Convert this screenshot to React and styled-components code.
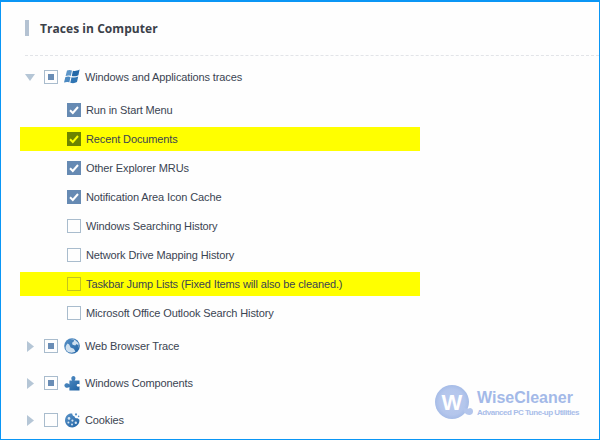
import React from "react";
import styled, { createGlobalStyle } from "styled-components";

const Global = createGlobalStyle`
  html, body { margin: 0; padding: 0; background: #fff; }
  body { font-family: "Liberation Sans", sans-serif; }
`;

const Frame = styled.div`
  position: relative;
  box-sizing: border-box;
  width: 600px;
  height: 440px;
  overflow: hidden;
  border: 1px solid #0a96f5;
  border-top-width: 2px;
  background: #fefefe;
  color: #3a4452;
  font-family: "Liberation Sans", sans-serif;
  font-size: 11px;
  letter-spacing: -0.12px;
`;

const Header = styled.header`
  display: flex;
  align-items: center;
  gap: 11px;
  height: 16px;
  margin: 18px 0 0 24px;
`;

const HeaderBar = styled.span`
  width: 4px;
  height: 16px;
  background: #b4c2d2;
`;

const Title = styled.h1`
  margin: 0;
  font-family: "Open Sans", sans-serif;
  font-size: 12px;
  font-weight: 700;
  letter-spacing: 0.05px;
  color: #3b4149;
`;

const Divider = styled.hr`
  height: 0;
  margin: 19px 0 0 24px;
  border: 0;
  border-top: 1px dashed #e2e4e8;
`;

const Tree = styled.div`
  display: flex;
  flex-direction: column;
  padding: 9px 0 0 19px;
`;

const Group = styled.div`
  display: flex;
  align-items: center;
  height: 24px;
  margin-top: ${(p) => p.$gap || 0}px;
  padding-left: 5px;
`;

const Caret = styled.span`
  display: flex;
  justify-content: center;
  width: 10px;
  margin-right: 9px;
`;

const Box = styled.span`
  box-sizing: border-box;
  display: flex;
  align-items: center;
  justify-content: center;
  flex: none;
  width: 14px;
  height: 14px;
  border: 1px solid ${(p) => (p.$hl ? "#c3c31e" : "#a9bccd")};
  background: ${(p) => (p.$checked ? (p.$hl ? "#6d8400" : "#668ab3") : "transparent")};
  ${(p) => p.$checked && `border-color: ${p.$hl ? "#6d8400" : "#668ab3"};`}
`;

const Dot = styled.span`
  width: 6px;
  height: 6px;
  background: #6a8db5;
`;

const GroupIcon = styled.span`
  display: flex;
  width: 16px;
  height: 16px;
  margin: 0 5px 0 6px;
`;

const Children = styled.div`
  display: flex;
  flex-direction: column;
  gap: 5px;
  margin-top: 9px;
`;

const Item = styled.div`
  display: flex;
  align-items: center;
  gap: 5px;
  width: 353px;
  height: 24px;
  padding-left: 47px;
  background: ${(p) => (p.$hl ? "#ffff00" : "transparent")};
`;

const Watermark = styled.div`
  position: absolute;
  left: 432px;
  top: 381px;
  display: flex;
  align-items: center;
  gap: 2px;
  letter-spacing: 0;
`;

const Brand = styled.div`
  display: flex;
  flex-direction: column;
`;

const BrandName = styled.span`
  font-size: 16px;
  font-weight: 700;
  line-height: 19px;
  color: #a3b9e8;
`;

const BrandTag = styled.span`
  font-size: 8px;
  font-weight: 700;
  line-height: 11px;
  letter-spacing: -0.48px;
  white-space: nowrap;
  color: #a9bde9;
`;

const Check = ({ color }) => (
  <svg width="10" height="10" viewBox="0 0 10 10">
    <path d="M1 5.2 L3.8 8 L9 2" fill="none" stroke={color} strokeWidth="2" />
  </svg>
);

const ArrowDown = () => (
  <svg width="10" height="7" viewBox="0 0 10 7"><path d="M0 0H10L5 7Z" fill="#b5c6d6" /></svg>
);
const ArrowRight = () => (
  <svg width="7" height="11" viewBox="0 0 7 11"><path d="M0 0L7 5.5L0 11Z" fill="#b5c6d6" /></svg>
);

const IconGradient = ({ id }) => (
  <defs>
    <linearGradient id={id} x1="0" y1="0" x2="1" y2="1">
      <stop offset="0" stopColor="#5a93c8" />
      <stop offset="1" stopColor="#1f62a3" />
    </linearGradient>
  </defs>
);

const WindowsIcon = () => (
  <svg width="16" height="16" viewBox="0 0 16 16">
    <path d="M3 1.6C4.8 0.8 6.4 0.9 8 1.6L6.8 7C5.2 6.4 3.6 6.4 1.6 7.1Z" fill="#5d96c9" />
    <path d="M8.9 1.7C10.8 2.3 12.8 2.1 15.6 0.6L14.4 6.2C12.2 7.4 10 7.6 7.8 7.1Z" fill="#2368a8" />
    <path d="M1.4 8C3.4 7.3 5 7.3 6.5 8L5.3 13.4C3.7 12.8 2 12.8 0 13.6Z" fill="#4b89c1" />
    <path d="M7.5 8.2C9.8 8.8 12 8.6 14.2 7.4L13 13C11 14.2 8.8 14.5 6.3 13.7Z" fill="#2f75b3" />
  </svg>
);

const GlobeIcon = () => (
  <svg width="16" height="16" viewBox="0 0 16 16">
    <IconGradient id="globe" />
    <circle cx="8" cy="8" r="7.8" fill="url(#globe)" />
    <path d="M1.6 9.4C1.4 12 3.2 14 6 14.6C8 15 10 14.6 11.4 13.6L9.8 10.8L6.6 9.4L5.2 6.6L3.6 5.4C2.6 6.4 1.8 7.8 1.6 9.4Z" fill="#cfe0ef" />
    <path d="M6.2 1.8L10.4 1.6L9.4 4L8 4.8L8.6 6.8L11.2 7.6L12.6 6L14.2 7.2C14.4 8.8 14 10 13.2 11.2L14.6 8.8L14.4 5L11 2Z" fill="#cfe0ef" />
  </svg>
);

const PuzzleIcon = () => (
  <svg width="16" height="16" viewBox="0 0 16 16">
    <IconGradient id="puzzle" />
    <path d="M5.4 5.6H8.2C7.2 4.4 7 3 7.7 1.9C8.5 0.8 10.4 0.8 11.1 1.9C11.8 3 11.4 4.4 10.5 5.6H15.5V9.4C14.3 8.7 12.9 9 12.7 10.2C12.5 11.6 14.2 12 15.5 11.3V15.5H5.4V12C4.3 12.9 2.5 13 1.3 12.2C0 11.2 0.1 9.6 1.3 8.8C2.6 8 4.3 8.3 5.4 9.5Z" fill="url(#puzzle)" />
  </svg>
);

const CookieIcon = () => (
  <svg width="16" height="16" viewBox="0 0 16 16">
    <IconGradient id="cookie" />
    <path d="M6 1.6C6.8 1.4 7.6 1.4 8.2 1.6C8.2 3.2 9.2 4.2 10.4 4.2C10.6 5.6 11.8 6.4 13.2 6.2C14.4 6.6 15 7.2 15.4 7.8C15.8 11.8 12.4 15.4 8.2 15.4C4.2 15.4 1 12.2 1 8.2C1 5.2 3 2.4 6 1.6Z" fill="url(#cookie)" />
    <circle cx="5" cy="6.4" r="1.3" fill="#d6e4f1" />
    <circle cx="4.4" cy="10.4" r="1" fill="#d6e4f1" />
    <circle cx="8.4" cy="8.6" r="1.1" fill="#d6e4f1" />
    <circle cx="8" cy="12.6" r="1" fill="#d6e4f1" />
    <circle cx="11.8" cy="10.8" r="1.2" fill="#d6e4f1" />
    <circle cx="12" cy="2.4" r="1.1" fill="#5c93c6" />
    <circle cx="14.6" cy="4.4" r="0.8" fill="#5c93c6" />
  </svg>
);

const Logo = () => (
  <svg width="42" height="40" viewBox="0 0 42 40">
    <defs>
      <radialGradient id="wise" cx="0.5" cy="0.5" r="0.5">
        <stop offset="0" stopColor="#b9caee" />
        <stop offset="0.75" stopColor="#b4c6ec" />
        <stop offset="1" stopColor="#a6bce7" />
      </radialGradient>
    </defs>
    <circle cx="19" cy="19" r="17" fill="url(#wise)" />
    <path d="M30 24C33 26 35 26 37 25C40 25 41 29 39 31C37 33 33 32 31 29Z" fill="#b4c6ec" />
    <text x="19" y="27" textAnchor="middle" fill="#fff" fontFamily="Liberation Sans, sans-serif" fontWeight="700" fontSize="22">W</text>
  </svg>
);

const items = [
  { label: "Run in Start Menu", checked: true },
  { label: "Recent Documents", checked: true, hl: true },
  { label: "Other Explorer MRUs", checked: true },
  { label: "Notification Area Icon Cache", checked: true },
  { label: "Windows Searching History" },
  { label: "Network Drive Mapping History" },
  { label: "Taskbar Jump Lists (Fixed Items will also be cleaned.)", hl: true },
  { label: "Microsoft Office Outlook Search History" },
];

export default function App() {
  return (
    <Frame>
      <Global />
      <Header>
        <HeaderBar />
        <Title>Traces in Computer</Title>
      </Header>
      <Divider />
      <Tree>
        <Group>
          <Caret><ArrowDown /></Caret>
          <Box><Dot /></Box>
          <GroupIcon><WindowsIcon /></GroupIcon>
          Windows and Applications traces
        </Group>
        <Children>
          {items.map((it) => (
            <Item key={it.label} $hl={it.hl}>
              <Box $checked={it.checked} $hl={it.hl}>
                {it.checked && <Check color={it.hl ? "#ffff00" : "#fff"} />}
              </Box>
              {it.label}
            </Item>
          ))}
        </Children>
        <Group $gap={9}>
          <Caret><ArrowRight /></Caret>
          <Box><Dot /></Box>
          <GroupIcon><GlobeIcon /></GroupIcon>
          Web Browser Trace
        </Group>
        <Group $gap={13}>
          <Caret><ArrowRight /></Caret>
          <Box><Dot /></Box>
          <GroupIcon><PuzzleIcon /></GroupIcon>
          Windows Components
        </Group>
        <Group $gap={13}>
          <Caret><ArrowRight /></Caret>
          <Box />
          <GroupIcon><CookieIcon /></GroupIcon>
          Cookies
        </Group>
      </Tree>
      <Watermark>
        <Logo />
        <Brand>
          <BrandName>WiseCleaner</BrandName>
          <BrandTag>Advanced PC Tune-up Utilities</BrandTag>
        </Brand>
      </Watermark>
    </Frame>
  );
}
